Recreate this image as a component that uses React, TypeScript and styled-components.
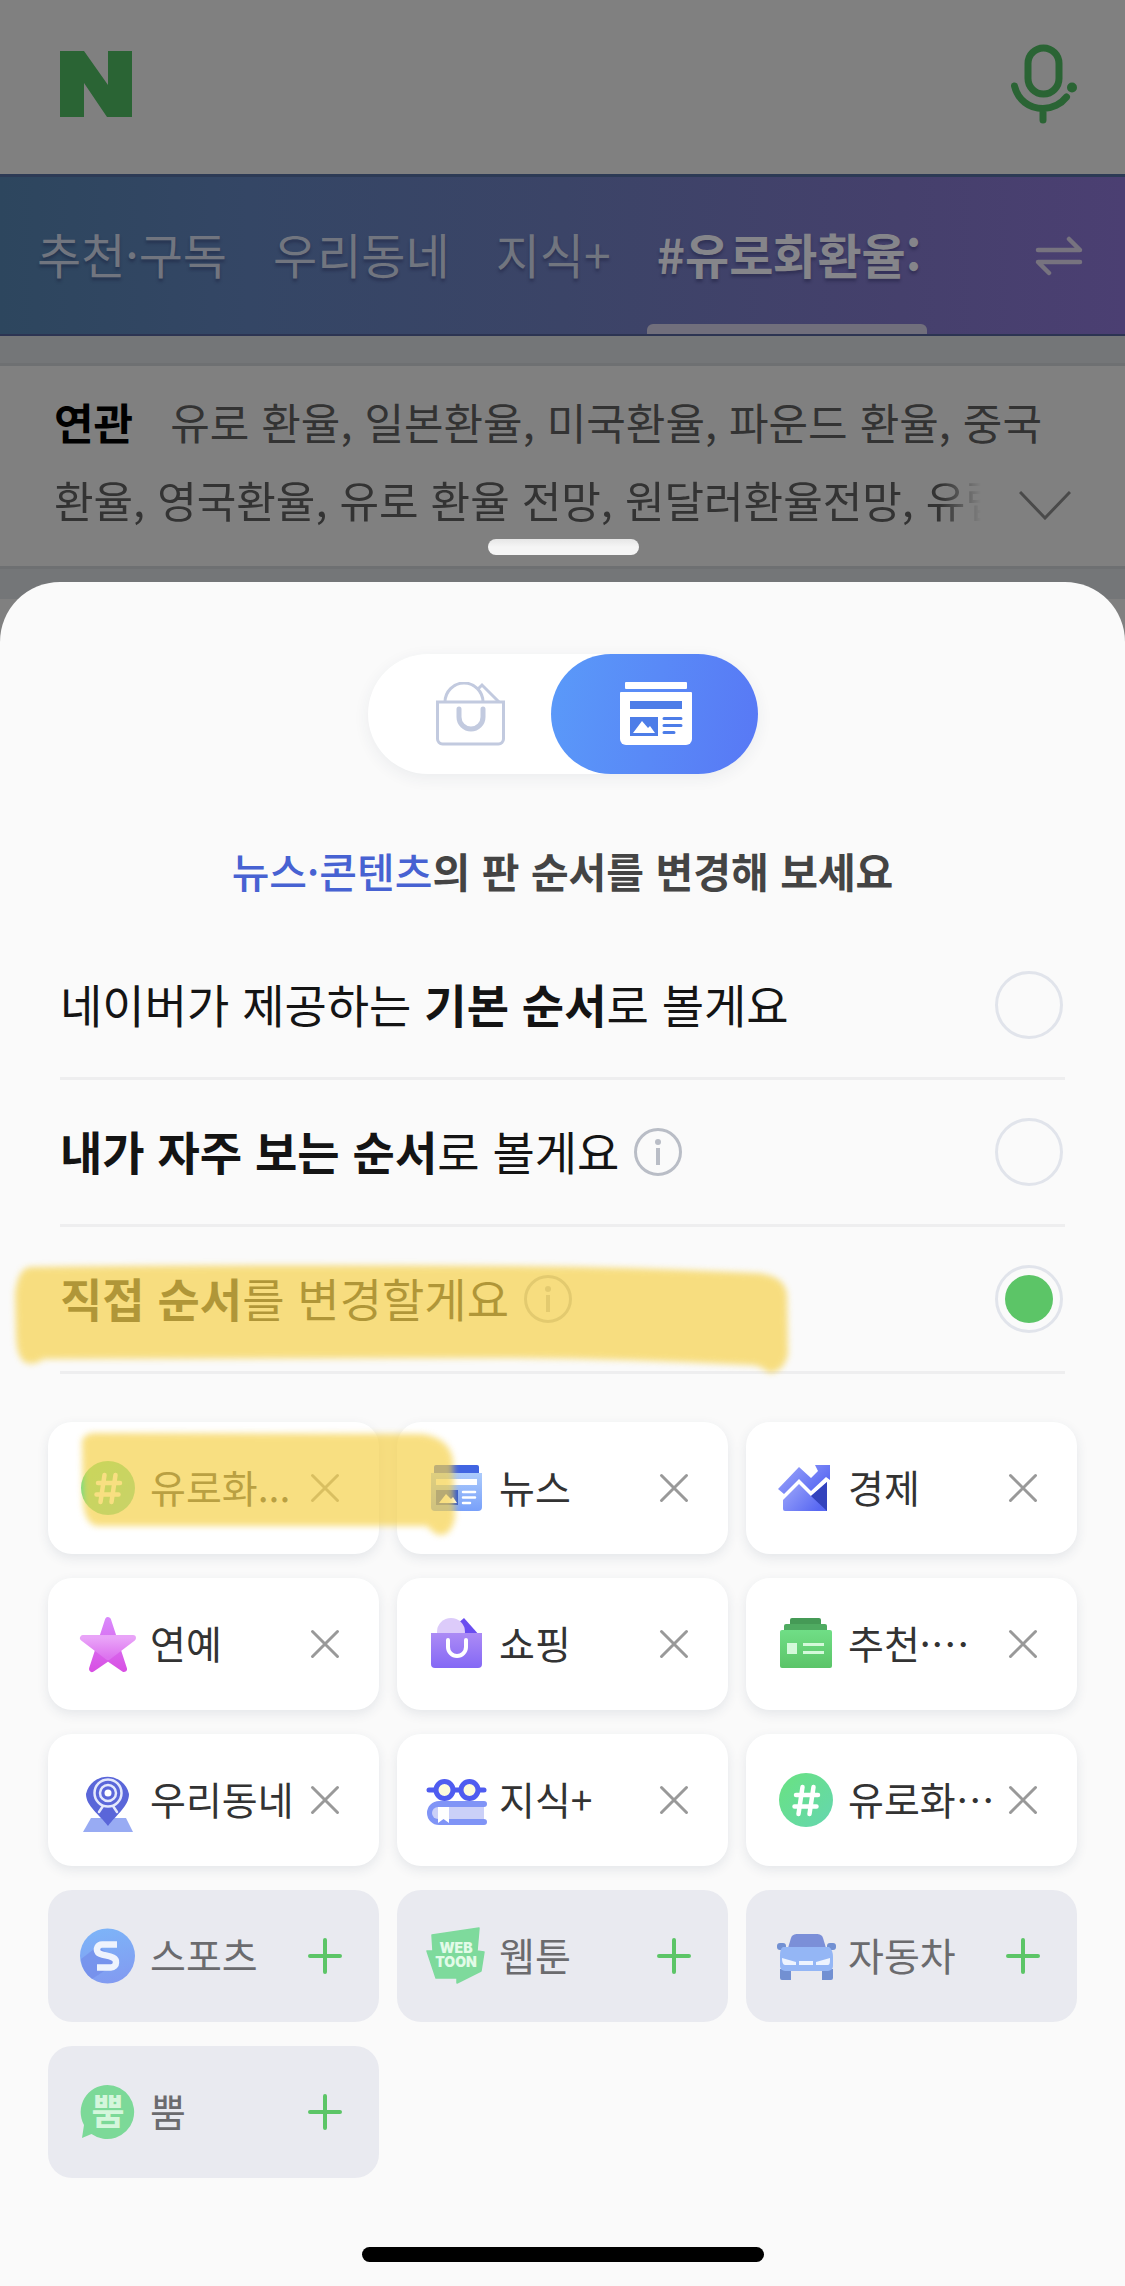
import React, { useState } from 'react';
import styled, { createGlobalStyle, css } from 'styled-components';

const GlobalStyle = createGlobalStyle`
  *, *::before, *::after { box-sizing: border-box; }
  body {
    margin: 0;
    background: #808080;
    font-family: "Noto Sans CJK KR", "Noto Sans", sans-serif;
    color: #111;
  }
  button { font: inherit; color: inherit; border: 0; padding: 0; background: none; cursor: pointer; }
  p, h2, ul { margin: 0; padding: 0; }
  svg { display: block; flex: none; }
`;

const Screen = styled.div`
  display: flex;
  flex-direction: column;
  min-height: 100vh;
`;

const Backdrop = styled.div`
  display: flex;
  flex-direction: column;
`;

const Header = styled.header`
  display: flex;
  align-items: center;
  justify-content: space-between;
  height: 174px;
  padding: 0 45px 6px 60px;
`;

const TabBar = styled.nav`
  display: flex;
  align-items: stretch;
  height: 162px;
  padding: 0 42px 0 37px;
  gap: 46px;
  border-top: 3px solid #2c3a55;
  border-bottom: 2px solid #2c3452;
  background: linear-gradient(90deg, #2d465e 0%, #344665 22%, #3b4467 50%, #45406c 80%, #4b3f72 100%);
`;

const Tab = styled.a<{ $active?: boolean }>`
  display: flex;
  align-items: center;
  position: relative;
  padding-bottom: 6px;
  color: ${p => (p.$active ? '#85858a' : '#71757f')};
  font-size: 48px;
  font-weight: ${p => (p.$active ? 700 : 400)};
  line-height: 60px;
  white-space: nowrap;
  text-decoration: none;
  text-shadow: 0 3px 3px rgba(20, 20, 50, 0.35);
  ${p => p.$active && css`
    &::after {
      content: '';
      position: absolute;
      left: -10px;
      right: -6px;
      bottom: 0;
      height: 10px;
      border-radius: 6px 6px 0 0;
      background: #716f7c;
    }
  `}
`;

const SwapButton = styled.button`
  display: flex;
  align-items: center;
  margin-left: auto;
`;

const Strip = styled.div`
  display: flow-root;
  background: #747678;
  padding-bottom: 30px;
`;

const RelatedPanel = styled.section`
  display: flex;
  align-items: flex-end;
  justify-content: space-between;
  margin: 27px 0 0;
  padding: 16px 54px 28px;
  border-top: 3px solid #6e7072;
  border-bottom: 3px solid #6e7072;
  background: #808080;
`;

const RelatedText = styled.p`
  flex: 1;
  min-width: 0;
  white-space: nowrap;
  color: #333;
  font-size: 43px;
  line-height: 78px;
`;

const FadeLine = styled.span`
  display: block;
  overflow: hidden;
  margin-right: 86px;
  mask-image: linear-gradient(90deg, #000 calc(100% - 44px), transparent calc(100% - 4px));
`;

const RelatedTitle = styled.strong`
  margin-right: 37px;
  color: #000;
`;

const MoreButton = styled.button`
  margin-left: -52px;
  padding: 0 0 18px;
`;

const Sheet = styled.main`
  position: relative;
  flex: 1;
  display: flex;
  flex-direction: column;
  align-items: center;
  margin-top: -17px;
  padding: 72px 48px 24px;
  border-radius: 60px 60px 0 0;
  background: #fafafa;
`;

const Grabber = styled.div`
  position: absolute;
  top: -43px;
  left: 50%;
  width: 151px;
  height: 16px;
  margin-left: -75px;
  border-radius: 8px;
  background: linear-gradient(#e6e6e6, #f5f5f5 50%);
`;

const Switcher = styled.div`
  display: flex;
  height: 120px;
  border-radius: 60px;
  background: #fff;
  box-shadow: 0 4px 16px rgba(40, 60, 90, 0.07);
`;

const SwitchOption = styled.button<{ $active?: boolean }>`
  display: flex;
  align-items: center;
  justify-content: center;
  width: ${p => (p.$active ? 207 : 183)}px;
  padding-left: ${p => (p.$active ? 4 : 24)}px;
  border-radius: 60px;
  ${p => p.$active && css`background: linear-gradient(100deg, #5a9af9, #5878f5);`}
`;

const Guide = styled.h2`
  margin: 66px 0 33px;
  color: #444;
  font-size: 41px;
  font-weight: 700;
  line-height: 60px;
  em { color: #4762d2; font-style: normal; font-weight: 500; }
`;

const OptionList = styled.fieldset`
  align-self: stretch;
  margin: 0 12px 48px;
  padding: 0;
  border: 0;
`;

const OptionRow = styled.div`
  position: relative;
  display: flex;
  align-items: center;
  height: 147px;
  border-bottom: 3px solid #eeeeef;
`;

const OptionLabel = styled.label`
  padding-bottom: 4px;
  color: #141414;
  font-size: 46px;
  line-height: 64px;
  white-space: nowrap;
`;

const InfoButton = styled.button`
  margin-left: 15px;
`;

const Radio = styled.input`
  appearance: none;
  display: grid;
  place-items: center;
  width: 68px;
  height: 68px;
  margin: 0 2px 0 auto;
  border: 3px solid #e1e4eb;
  border-radius: 50%;
  &:checked::after {
    content: '';
    width: 48px;
    height: 48px;
    border-radius: 50%;
    background: #5cc567;
  }
`;

const Marker = styled.svg`
  position: absolute;
  z-index: 2;
  pointer-events: none;
  overflow: visible;
  fill: rgb(246, 209, 73);
  opacity: 0.69;
  filter: blur(3px);
`;

const RowMarker = styled(Marker)`
  left: -46px;
  top: 37px;
  width: 776px;
  height: 110px;
`;

const CardMarker = styled(Marker)`
  left: 33px;
  top: 10px;
  width: 376px;
  height: 110px;
`;

const Grid = styled.ul`
  align-self: stretch;
  display: grid;
  grid-template-columns: repeat(3, 1fr);
  gap: 24px 18px;
  list-style: none;
`;

const Card = styled.li<{ $off?: boolean }>`
  position: relative;
  display: flex;
  align-items: center;
  height: 132px;
  padding: 0 34px 0 27px;
  border-radius: 24px;
  background: ${p => (p.$off ? '#e9eaf0' : '#fff')};
  color: ${p => (p.$off ? '#6b6b6e' : '#333')};
  box-shadow: ${p => (p.$off ? 'none' : '0 4px 12px rgba(40, 60, 90, 0.1)')};
`;

const CardIcon = styled.span`
  display: flex;
  flex: none;
  width: 66px;
`;

const CardLabel = styled.span`
  flex: 1;
  padding: 0 0 4px 9px;
  font-size: 39px;
  line-height: 56px;
  white-space: nowrap;
`;

const CardAction = styled.button`
  display: flex;
  align-items: center;
  justify-content: center;
  width: 40px;
  height: 40px;
  margin-left: -20px;
`;

const HomeBar = styled.div`
  width: 402px;
  height: 15px;
  margin-top: 69px;
  border-radius: 8px;
  background: #000;
`;

const Cross = () => (
  <svg width="30" height="30" viewBox="0 0 30 30" stroke="#999" strokeWidth="3" strokeLinecap="round">
    <path d="M2.500 2.500l25 25M27.500 2.500l-25 25" />
  </svg>
);

const Plus = () => (
  <svg width="36" height="36" viewBox="0 0 36 36" stroke="#5cc567" strokeWidth="4" strokeLinecap="round">
    <path d="M18 2v32M3 18h30" />
  </svg>
);

const Info = () => (
  <svg width="48" height="48" viewBox="0 0 48 48" fill="none" stroke="#b9bdc6" strokeWidth="3">
    <circle cx="24" cy="24" r="22.500" />
    <path d="M24 20v17" strokeWidth="4" />
    <circle cx="24" cy="14" r="3" fill="#b9bdc6" stroke="none" />
  </svg>
);

const Frame = ({ children }: { children: React.ReactNode }) => (
  <svg width="66" height="66" viewBox="0 0 66 66">{children}</svg>
);

const HashIcon = () => (
  <Frame>
    <linearGradient id="hash" x1="0" y1="0" x2="1" y2="1">
      <stop offset="0.2" stopColor="#68e08a" />
      <stop offset="1" stopColor="#65d6b0" />
    </linearGradient>
    <circle cx="33" cy="33" r="27" fill="url(#hash)" />
    <path d="M29.500 20l-4 27M40.500 20l-4 27M23 28h22M21.500 39.500h22" stroke="#fff" strokeWidth="4.500" strokeLinecap="round" />
  </Frame>
);

const NewsIcon = () => (
  <Frame>
    <linearGradient id="news" x1="0" y1="0" x2="0" y2="1">
      <stop offset="0" stopColor="#accbfb" />
      <stop offset="1" stopColor="#78a0fa" />
    </linearGradient>
    <rect x="10" y="10" width="45" height="12" rx="2" fill="#4165e2" />
    <path d="M7 18h51v34a4 4 0 0 1-4 4H11a4 4 0 0 1-4-4z" fill="url(#news)" />
    <path d="M12 24h41v6H12z" fill="#fff" />
    <path d="M12 35h22v15H12z" fill="#2a55d6" />
    <path d="M15 48l7-9 5 5 2-2 4 6z" fill="#fff" />
    <path d="M39 37h12M39 42.500h12M39 48h7" stroke="#fff" strokeWidth="2.500" strokeLinecap="round" />
  </Frame>
);

const EconomyIcon = () => (
  <Frame>
    <linearGradient id="eco" x1="0" y1="0" x2="1" y2="0.6">
      <stop offset="0" stopColor="#a0a9fb" />
      <stop offset="1" stopColor="#5868f2" />
    </linearGradient>
    <path d="M5 34l21-22 12 11 7-7-3-6h15v15l-4-3-15 14-12-12-15 15z" fill="url(#eco)" />
    <path d="M10 45l16-16 12 12 16-14v29H12a2 2 0 0 1-2-2z" fill="url(#eco)" />
    <path d="M38 41l16-14v29z" fill="#3343bd" />
  </Frame>
);

const StarIcon = () => (
  <Frame>
    <linearGradient id="star" x1="0" y1="0" x2="0" y2="1">
      <stop offset="0" stopColor="#d988fb" />
      <stop offset="1" stopColor="#d851e4" />
    </linearGradient>
    <linearGradient id="starTop" x1="0" y1="0" x2="0" y2="1">
      <stop offset="0" stopColor="#e9a4f8" />
      <stop offset="1" stopColor="#dd74ef" />
    </linearGradient>
    <path d="M33 9l16 49-16-11-16 11z" fill="url(#star)" stroke="url(#star)" strokeWidth="6" strokeLinejoin="round" />
    <path d="M8 27h50L33 46z" fill="url(#starTop)" stroke="url(#starTop)" strokeWidth="6" strokeLinejoin="round" />
  </Frame>
);

const ShoppingIcon = () => (
  <Frame>
    <linearGradient id="shop" x1="0" y1="0" x2="0" y2="1">
      <stop offset="0" stopColor="#ac8bf5" />
      <stop offset="1" stopColor="#8468f5" />
    </linearGradient>
    <path d="M32 14l8-7 16 18H34z" fill="#6a4df0" />
    <circle cx="27" cy="21" r="14" fill="#dccbfa" />
    <path d="M7 22h51v31a4 4 0 0 1-4 4H11a4 4 0 0 1-4-4z" fill="url(#shop)" />
    <path d="M24 29v7a9 9 0 0 0 18 0v-7" fill="none" stroke="#fff" strokeWidth="4" strokeLinecap="round" />
  </Frame>
);

const PicksIcon = () => (
  <Frame>
    <linearGradient id="picks" x1="0" y1="0" x2="0" y2="1">
      <stop offset="0" stopColor="#70de86" />
      <stop offset="1" stopColor="#5bc468" />
    </linearGradient>
    <rect x="17" y="7" width="31" height="12" rx="2" fill="#459a56" />
    <rect x="11" y="13" width="43" height="12" rx="2" fill="#4fab61" />
    <rect x="7" y="19" width="52" height="38" rx="2" fill="url(#picks)" />
    <rect x="14" y="32" width="10" height="11" fill="#d4f9da" />
    <path d="M30 33.500h21M30 41.500h21" stroke="#d4f9da" strokeWidth="3" />
  </Frame>
);

const TownIcon = () => (
  <Frame>
    <path d="M16 51h35l7 14H8z" fill="#98abf3" />
    <path d="M33 59C24 47 11 39 11 27a22 22 0 0 1 43 0c0 12-12 20-21 32z" fill="#5a66d9" />
    <g fill="none" stroke="#e4e8fc" strokeWidth="2.500">
      <circle cx="33" cy="26" r="13.500" />
      <circle cx="33" cy="26" r="8" />
      <path d="M28 39l-4 6M38 39l4 6" strokeLinecap="round" />
    </g>
    <circle cx="33" cy="26" r="3.500" fill="#fff" />
  </Frame>
);

const KnowledgeIcon = () => (
  <Frame>
    <path d="M5 23h55" stroke="#4f5cf0" strokeWidth="5" strokeLinecap="round" />
    <g fill="#fdfbdc" stroke="#4f5cf0" strokeWidth="5">
      <circle cx="20.500" cy="23" r="8.500" />
      <circle cx="45.500" cy="23" r="8.500" />
    </g>
    <path d="M15 34h45a3 3 0 0 1 0 6v12a3 3 0 0 1 0 6H15a12 12 0 0 1 0-24z" fill="#8094f6" />
    <path d="M14 40h46v12H14a6 6 0 0 1 0-12z" fill="#cbd0f8" />
    <path d="M14 40h11v16l-5.500-4-5.500 4z" fill="#fff" />
  </Frame>
);

const SportsIcon = () => (
  <Frame>
    <linearGradient id="sport" x1="0.3" y1="0" x2="0.5" y2="1">
      <stop offset="0" stopColor="#7db4f8" />
      <stop offset="1" stopColor="#829bf1" />
    </linearGradient>
    <circle cx="32.500" cy="33" r="27.500" fill="url(#sport)" />
    <path d="M6 36l17-13 20 16-26 17A27 27 0 0 1 6 36z" fill="#7289e8" opacity="0.6" />
    <path d="M42 21.500H27a5 5 0 0 0-4 8c3 4 19 2 18 10a5 5 0 0 1-5 5H22" fill="none" stroke="#eef3fd" strokeWidth="6.500" strokeLinejoin="round" />
  </Frame>
);

const BadgeText = styled.text`
  font-family: Inter, sans-serif;
  font-size: 14px;
  font-weight: 900;
  fill: #e2fbe8;
  text-anchor: middle;
`;

const BubbleText = styled.text`
  font-size: 36px;
  font-weight: 700;
  fill: #d4f6dc;
  text-anchor: middle;
`;

const WebtoonIcon = () => (
  <Frame>
    <path d="M8 12l47-7-2 23 7 1-3 19-24 12v-5l-21 0-9-27h6z" fill="#7eda9c" stroke="#7eda9c" strokeWidth="1.500" strokeLinejoin="round" />
    <BadgeText x="32" y="30">WEB</BadgeText>
    <BadgeText x="32" y="44">TOON</BadgeText>
  </Frame>
);

const CarIcon = () => (
  <Frame>
    <path d="M7 46h11v11H9a2 2 0 0 1-2-2zM49 46h11v9a2 2 0 0 1-2 2h-9z" fill="#7290d2" />
    <rect x="4" y="20" width="9" height="7" rx="3" fill="#7290d2" />
    <rect x="54" y="20" width="9" height="7" rx="3" fill="#7290d2" />
    <path d="M15 25l3-10c1-3 3-4 7-4h18c4 0 6 1 7 4l3 10z" fill="#7b8fd8" />
    <path d="M10 24h46c3 2 4 6 4 10v9a5 5 0 0 1-5 5H12a5 5 0 0 1-5-5v-9c0-4 0-8 3-10z" fill="#94b6f5" />
    <path d="M9 35l14 4v3H12c-2 0-3-3-3-7zM57 35l-14 4v3h12c2 0 2-3 2-7zM26 38h14v4H26z" fill="#edf3fe" />
  </Frame>
);

const BubbleIcon = () => (
  <Frame>
    <path d="M32.500 6a27 27 0 1 1-16 49L7 59l2-13A27 27 0 0 1 32.500 6z" fill="#7cd998" />
    <BubbleText x="33" y="46">뿜</BubbleText>
  </Frame>
);

const BagOutline = () => (
  <svg width="70" height="64" viewBox="0 0 70 64" fill="none" stroke="#c2cadf" strokeWidth="3">
    <path d="M1.500 20h66v37a5 5 0 0 1-5 5h-56a5 5 0 0 1-5-5z" />
    <path d="M9 20a19 19 0 0 1 38 0M42 7l4-4 17 17" />
    <path d="M23 27v8a12 12 0 0 0 24 0v-8" strokeWidth="5" strokeLinecap="round" />
  </svg>
);

const NewsOutline = () => (
  <svg width="72" height="64" viewBox="0 0 72 64">
    <rect x="5" y="0" width="62" height="7" rx="1" fill="#fff" />
    <path d="M0 11a1 1 0 0 1 1-1h70a1 1 0 0 1 1 1v46a6 6 0 0 1-6 6H6a6 6 0 0 1-6-6z" fill="#fff" />
    <path d="M10 19h52v8H10zM10 35h28v19H10z" fill="#4d7de8" />
    <path d="M13 51l9-12 6 7 2-2 5 7z" fill="#fff" />
    <path d="M44 36.500h17M44 43.500h17M44 50.500h10" stroke="#4d7de8" strokeWidth="3" strokeLinecap="round" />
  </svg>
);

type Item = { id: string; label: string; icon: () => React.ReactElement; off?: boolean };

const items: Item[] = [
  { id: 'euro', label: '유로화...', icon: HashIcon },
  { id: 'news', label: '뉴스', icon: NewsIcon },
  { id: 'economy', label: '경제', icon: EconomyIcon },
  { id: 'star', label: '연예', icon: StarIcon },
  { id: 'shopping', label: '쇼핑', icon: ShoppingIcon },
  { id: 'picks', label: '추천·…', icon: PicksIcon },
  { id: 'town', label: '우리동네', icon: TownIcon },
  { id: 'knowledge', label: '지식+', icon: KnowledgeIcon },
  { id: 'euro2', label: '유로화…', icon: HashIcon },
  { id: 'sports', label: '스포츠', icon: SportsIcon, off: true },
  { id: 'webtoon', label: '웹툰', icon: WebtoonIcon, off: true },
  { id: 'car', label: '자동차', icon: CarIcon, off: true },
  { id: 'bubble', label: '뿜', icon: BubbleIcon, off: true },
];

export default function App() {
  const [order, setOrder] = useState('custom');
  return (
    <Screen lang="ko">
      <GlobalStyle />
      <Backdrop>
        <Header>
          <svg width="72" height="66" viewBox="0 0 72 66" role="img" aria-label="N">
            <path d="M0 0h24l24 34V0h24v66H47L24 32v34H0z" fill="#2a6434" />
          </svg>
          <button aria-label="음성 검색">
            <svg width="70" height="80" viewBox="0 0 70 80" fill="none" stroke="#2a6434" strokeWidth="7" strokeLinecap="round">
              <rect x="18" y="4" width="31" height="46" rx="15.500" />
              <path d="M4.500 42C8 56 19 64.500 33 64.500C42 64.500 51 60 56.500 53M33 65v11" />
              <circle cx="62" cy="43.500" r="5" fill="#2a6434" stroke="none" />
            </svg>
          </button>
        </Header>
        <TabBar>
          <Tab href="#picks">추천·구독</Tab>
          <Tab href="#town">우리동네</Tab>
          <Tab href="#knowledge">지식+</Tab>
          <Tab href="#euro" $active>#유로화환율:</Tab>
          <SwapButton aria-label="순서 변경">
            <svg width="48" height="40" viewBox="0 0 48 40" fill="none" stroke="#77737f" strokeWidth="4.500" strokeLinecap="round" strokeLinejoin="round">
              <path d="M3 14h42L34 3M45 26H3l11 11" />
            </svg>
          </SwapButton>
        </TabBar>
        <Strip>
          <RelatedPanel>
            <RelatedText>
              <RelatedTitle>연관</RelatedTitle>유로 환율, 일본환율, 미국환율, 파운드 환율, 중국
              <FadeLine>환율, 영국환율, 유로 환율 전망, 원달러환율전망, 유럽</FadeLine>
            </RelatedText>
            <MoreButton aria-label="더보기">
              <svg width="52" height="29" viewBox="0 0 52 29" fill="none" stroke="#4a4a4a" strokeWidth="3">
                <path d="M1 1l25 26L51 1" />
              </svg>
            </MoreButton>
          </RelatedPanel>
        </Strip>
      </Backdrop>

      <Sheet>
        <Grabber />
        <Switcher>
          <SwitchOption aria-label="쇼핑"><BagOutline /></SwitchOption>
          <SwitchOption $active aria-label="뉴스·콘텐츠"><NewsOutline /></SwitchOption>
        </Switcher>
        <Guide><em>뉴스·콘텐츠</em>의 판 순서를 변경해 보세요</Guide>

        <OptionList>
          <OptionRow>
            <OptionLabel htmlFor="default">네이버가 제공하는 <b>기본 순서</b>로 볼게요</OptionLabel>
            <Radio type="radio" name="order" id="default" checked={order === 'default'} onChange={() => setOrder('default')} />
          </OptionRow>
          <OptionRow>
            <OptionLabel htmlFor="frequent"><b>내가 자주 보는 순서</b>로 볼게요</OptionLabel>
            <InfoButton aria-label="도움말"><Info /></InfoButton>
            <Radio type="radio" name="order" id="frequent" checked={order === 'frequent'} onChange={() => setOrder('frequent')} />
          </OptionRow>
          <OptionRow>
            <OptionLabel htmlFor="custom"><b>직접 순서</b>를 변경할게요</OptionLabel>
            <InfoButton aria-label="도움말"><Info /></InfoButton>
            <Radio type="radio" name="order" id="custom" checked={order === 'custom'} onChange={() => setOrder('custom')} />
            <RowMarker viewBox="0 0 776 110">
              <path d="M16 3Q250 0 500 2Q620 3 740 9Q770 10 773 30L774 90Q770 108 755 109Q745 100 735 101Q620 95 500 94L30 95Q16 104 8 96Q2 88 2 70L1 30Q4 4 16 3z" />
            </RowMarker>
          </OptionRow>
        </OptionList>

        <Grid>
          {items.map(({ id, label, icon: Icon, off }) => (
            <Card key={id} $off={off}>
              <CardIcon><Icon /></CardIcon>
              <CardLabel>{label}</CardLabel>
              <CardAction aria-label={off ? '추가' : '삭제'}>{off ? <Plus /> : <Cross />}</CardAction>
              {id === 'euro' && (
                <CardMarker viewBox="0 0 376 110">
                  <path d="M12 1L340 2Q368 5 372 28L374 86Q370 104 358 103Q352 101 346 94L16 94Q4 92 2 70L1 8Q4 2 12 1z" />
                </CardMarker>
              )}
            </Card>
          ))}
        </Grid>
        <HomeBar />
      </Sheet>
    </Screen>
  );
}
